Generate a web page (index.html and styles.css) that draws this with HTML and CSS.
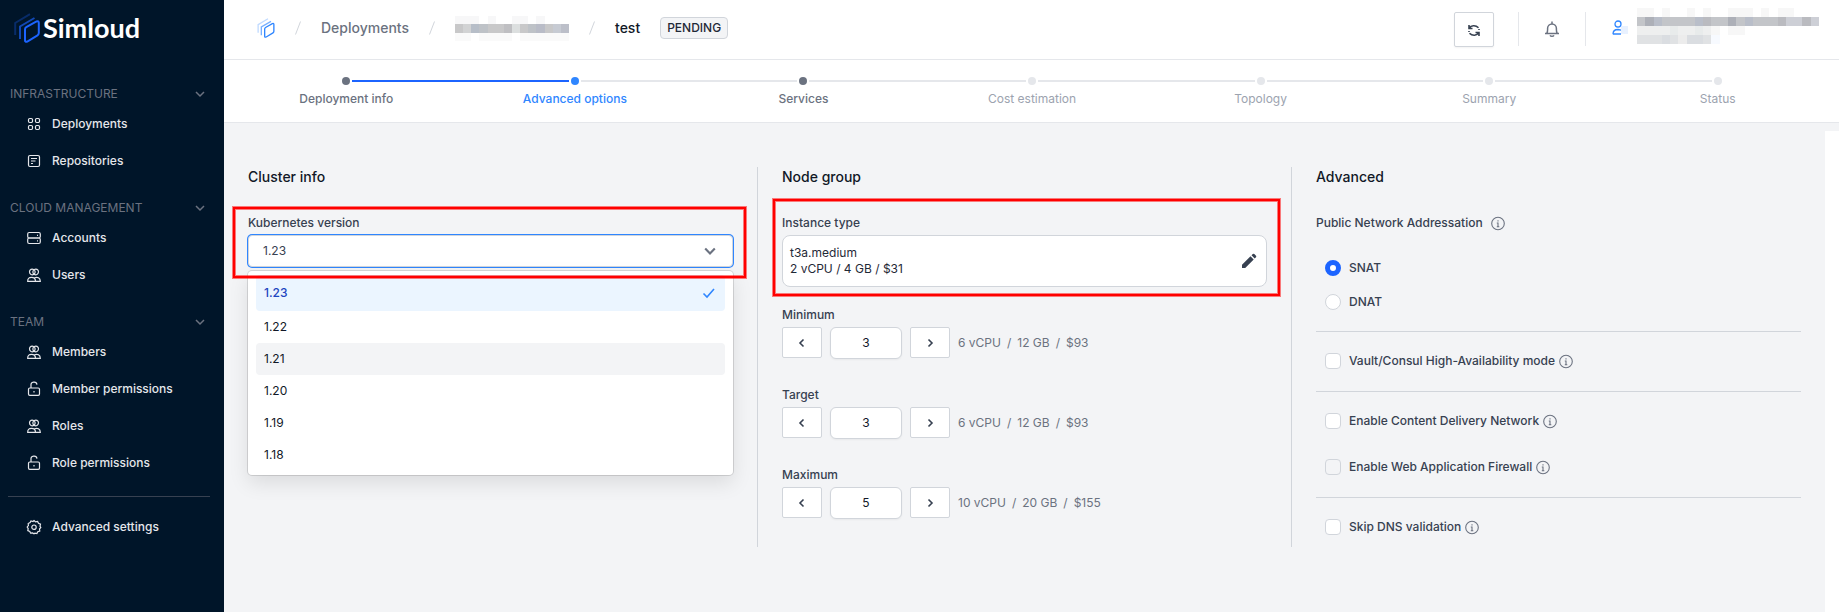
FILE: index.html
```html
<!DOCTYPE html>
<html lang="en">
<head>
<meta charset="utf-8">
<title>Simloud – Advanced options</title>
<link rel="stylesheet" href="styles.css">
</head>
<body>
<svg class="sprite" aria-hidden="true">
  <symbol id="i-chevron" viewBox="0 0 10 10"><path d="M1 3l4 4 4-4"/></symbol>
  <symbol id="i-left" viewBox="0 0 10 10"><path d="M6.500 1.500L3 5l3.500 3.500"/></symbol>
  <symbol id="i-right" viewBox="0 0 10 10"><path d="M3.500 1.500L7 5 3.500 8.500"/></symbol>
  <symbol id="i-grid" viewBox="0 0 16 16"><rect x="2.500" y="2.500" width="4" height="4" rx="1.200"/><rect x="9.500" y="2.500" width="4" height="4" rx="1.200"/><rect x="2.500" y="9.500" width="4" height="4" rx="1.200"/><rect x="9.500" y="9.500" width="4" height="4" rx="1.200"/></symbol>
  <symbol id="i-repo" viewBox="0 0 16 16"><rect x="2.500" y="2.500" width="11" height="11" rx="1.500"/><path d="M5 5.500h6M5 8h4.500M5 10.500h2"/></symbol>
  <symbol id="i-server" viewBox="0 0 16 16"><rect x="1.700" y="2.500" width="12.600" height="5.500" rx="1.500"/><rect x="1.700" y="8" width="12.600" height="5.500" rx="1.500"/><path d="M11 5.300h1M11 10.800h1"/></symbol>
  <symbol id="i-users" viewBox="0 0 16 16"><path d="M8 2.700C6 1.400 3.500 2.300 3.500 4.800S6 8.600 8 7.200c2 1.400 4.500 0 4.500-2.400S10 1.400 8 2.700zM8 2.700c1.500 1.300 1.500 3.300 0 4.500M8 2.700C6.500 4 6.500 6 8 7.200"/><path d="M1.700 14.300c0-3 1.500-4 3.800-4s4 1 4 4zM8.500 10.800c3-1.300 5.800 0 5.800 3.500H9.500"/></symbol>
  <symbol id="i-lock" viewBox="0 0 16 16"><rect x="2.500" y="7" width="11" height="7.300" rx="1.300"/><path d="M5 7V4.500a3 3 0 0 1 6-.8M8 10v1.500"/></symbol>
  <symbol id="i-gear" viewBox="0 0 16 16"><path d="M8 1.500l1.500 1.400 2.100-.5.900 1.900 2 .9-.5 2L14.800 8.500 13.500 10l.3 2-2 .8-.9 1.800-2-.4L8 14.800l-1.400-.9-2 .3-.8-1.800-2-.8.400-2L1.200 8l1.200-1.500-.2-2 1.900-.9.900-1.700 2 .6z"/><circle cx="8" cy="8.200" r="2.200"/></symbol>
  <symbol id="i-info" viewBox="0 0 16 16"><circle cx="8" cy="8.500" r="6.300"/><path d="M8 5.200v1.300M6.800 8H8v3.700M6.800 11.700h2.500"/></symbol>
  <symbol id="i-stack" viewBox="0 0 26 30"><path d="M1.200 22V10L16 1.200" opacity=".3"/><path d="M6 26V13.500L20.500 5" opacity=".65"/><path d="M11 16.500q0-1.500 1.300-2.300L22.500 8.500q2.300-1 2.300 1.300V20q0 1.500-1.300 2.300L13.300 28.500q-2.300 1-2.300-1.300z"/></symbol>
</svg>

<div class="app">
  <aside class="sidebar">
    <a class="brand" href="#"><svg class="brand-mark"><use href="#i-stack"/></svg><span>Simloud</span></a>
    <nav class="menu">
      <section class="menu-group">
        <button class="menu-title" type="button">INFRASTRUCTURE<svg class="icon-s"><use href="#i-chevron"/></svg></button>
        <a class="menu-item" href="#"><svg class="icon"><use href="#i-grid"/></svg>Deployments</a>
        <a class="menu-item" href="#"><svg class="icon"><use href="#i-repo"/></svg>Repositories</a>
      </section>
      <section class="menu-group">
        <button class="menu-title" type="button">CLOUD MANAGEMENT<svg class="icon-s"><use href="#i-chevron"/></svg></button>
        <a class="menu-item" href="#"><svg class="icon"><use href="#i-server"/></svg>Accounts</a>
        <a class="menu-item" href="#"><svg class="icon"><use href="#i-users"/></svg>Users</a>
      </section>
      <section class="menu-group">
        <button class="menu-title" type="button">TEAM<svg class="icon-s"><use href="#i-chevron"/></svg></button>
        <a class="menu-item" href="#"><svg class="icon"><use href="#i-users"/></svg>Members</a>
        <a class="menu-item" href="#"><svg class="icon"><use href="#i-lock"/></svg>Member permissions</a>
        <a class="menu-item" href="#"><svg class="icon"><use href="#i-users"/></svg>Roles</a>
        <a class="menu-item" href="#"><svg class="icon"><use href="#i-lock"/></svg>Role permissions</a>
      </section>
    </nav>
    <div class="menu-footer">
      <a class="menu-item" href="#"><svg class="icon"><use href="#i-gear"/></svg>Advanced settings</a>
    </div>
  </aside>

  <div class="page">
    <header class="topbar">
      <nav class="crumbs" aria-label="Breadcrumb">
        <a class="crumb-home" href="#" aria-label="Home"><svg class="home-mark"><use href="#i-stack"/></svg></a>
        <svg class="slash" viewBox="0 0 6 14"><path d="M.500 13.500L5.500 .500"/></svg>
        <a class="crumb" href="#">Deployments</a>
        <svg class="slash" viewBox="0 0 6 14"><path d="M.500 13.500L5.500 .500"/></svg>
        <svg class="mosaic mosaic-crumb" viewBox="0 0 14 3" preserveAspectRatio="none" shape-rendering="crispEdges">
          <path fill="#f7f7f8" d="M0 0h3v1H0zM4 0h1v1H4zM7 0h2v1H7zM10 0h1v1h-1z"/><path fill="#fafafa" d="M0 2h2v1H0zM3 2h4v1H3zM8 2h6v1H8z"/>
          <path fill="#c8c8c9" d="M0 1h14v1H0z"/><path fill="#d2d3d4" d="M1 1h1v1H1z"/><path fill="#b7bec8" d="M2 1h1v1H2z"/><path fill="#bec2c7" d="M3 1h1v1H3zM9 1h1v1H9z"/><path fill="#bfbfc2" d="M6 1h1v1H6z"/><path fill="#dcdfdf" d="M7 1h1v1H7z"/><path fill="#b9bcc7" d="M10 1h1v1h-1z"/><path fill="#c7cbd3" d="M12 1h1v1h-1z"/><path fill="#bcbfc9" d="M13 1h1v1h-1z"/>
        </svg>
        <svg class="slash" viewBox="0 0 6 14"><path d="M.500 13.500L5.500 .500"/></svg>
        <span class="crumb crumb-current">test</span>
        <span class="badge">PENDING</span>
      </nav>
      <div class="tools">
        <button class="refresh" type="button" aria-label="Refresh"><svg class="icon" viewBox="0 0 16 16"><path d="M3 3v3.500h3.500M3.300 6.300C5 3.300 9.500 2.800 12.500 5.800M13 14v-3.500H9.500M12.700 10.700c-1.700 3-6.200 3.500-9.200.5M13 8V7M3 9v1"/></svg></button>
        <div class="tool-cell">
          <button class="bell" type="button" aria-label="Notifications"><svg viewBox="0 0 18 18"><path d="M2 13.500h14M3.800 13.300c1-1.500.8-3 .8-5a4.400 4.400 0 0 1 8.800 0c0 2-.2 3.500.8 5M9 3.700V1.500M7 15.300c.8 1.300 3.200 1.300 4 0"/></svg></button>
        </div>
        <div class="account">
          <svg class="user" viewBox="0 -4 16 20"><circle cx="6" cy="4" r="3"/><path d="M1 14.200c0-3.500 2-4.700 5-4.700l3 .7M1 14h8"/><path class="user-tint" d="M9 6h8v8H9z"/></svg>
          <svg class="mosaic mosaic-user" viewBox="0 0 22 4" preserveAspectRatio="none" shape-rendering="crispEdges">
            <path fill="#f7f7f7" d="M0 0h2v1H0zM3 0h1v1H3zM6 0h1v1H6zM8 0h1v1H8zM11 0h3v1h-3zM15 0h1v1h-1zM17 0h2v1h-2zM9 2h1v1H9zM11 2h2v1h-2z"/>
            <path fill="#c3c5c9" d="M0 1h22v1H0z"/><path fill="#adb0b8" d="M1 1h1v1H1zM11 1h1v1h-1z"/><path fill="#b9bec9" d="M2 1h1v1H2zM7 1h1v1H7zM13 1h1v1h-1z"/><path fill="#babbc0" d="M8 1h1v1H8zM17 1h1v1h-1zM20 1h1v1h-1z"/><path fill="#cdcfd6" d="M18 1h2v1h-2zM21 1h1v1h-1z"/>
            <path fill="#eeefef" d="M0 2h9v1H0z"/><path fill="#e8ebeb" d="M4 2h1v1H4zM7 2h1v1H7z"/><path fill="#e0e2e4" d="M0 3h9v1H0z"/><path fill="#ececec" d="M5 3h1v1H5z"/><path fill="#dadde1" d="M3 3h1v1H3zM6 3h2v1H6z"/><path fill="#f7faff" d="M9 3h1v1H9z"/>
          </svg>
        </div>
      </div>
    </header>

    <ol class="stepper">
      <li class="step visited first"><span class="rail"><i class="dot"></i></span>Deployment info</li>
      <li class="step active"><span class="rail"><i class="dot"></i></span>Advanced options</li>
      <li class="step visited"><span class="rail"><i class="dot"></i></span>Services</li>
      <li class="step"><span class="rail"><i class="dot"></i></span>Cost estimation</li>
      <li class="step"><span class="rail"><i class="dot"></i></span>Topology</li>
      <li class="step"><span class="rail"><i class="dot"></i></span>Summary</li>
      <li class="step last"><span class="rail"><i class="dot"></i></span>Status</li>
    </ol>

    <main class="workspace">
      <form class="columns">
        <section class="column">
          <h2>Cluster info</h2>
          <div class="field">
            <label for="k8s">Kubernetes version</label>
            <div class="select-box">
              <select id="k8s"><option>1.23</option><option>1.22</option><option>1.21</option><option>1.20</option><option>1.19</option><option>1.18</option></select>
              <svg class="select-arrow"><use href="#i-chevron"/></svg>
              <ul class="options" role="listbox">
                <li class="option selected" role="option" aria-selected="true">1.23<svg class="check" viewBox="0 0 14 14"><path d="M1.500 7.500L5 11l7-8"/></svg></li>
                <li class="option" role="option">1.22</li>
                <li class="option hover" role="option">1.21</li>
                <li class="option" role="option">1.20</li>
                <li class="option" role="option">1.19</li>
                <li class="option" role="option">1.18</li>
              </ul>
            </div>
            <div class="mark mark-version"></div>
          </div>
        </section>

        <section class="column">
          <h2>Node group</h2>
          <div class="field">
            <label for="instance">Instance type</label>
            <button class="instance" id="instance" type="button"><span>t3a.medium<br>2 vCPU / 4 GB / $31</span><svg class="pencil" viewBox="0 0 16 16"><path d="M1 15v-3.200L9.500 3.300l3.200 3.200L4.200 15zM10.500 2.300l1.300-1.300q.8-.6 1.500 0l1.700 1.700q.6.800 0 1.500l-1.300 1.300z"/></svg></button>
            <div class="mark mark-instance"></div>
          </div>
          <div class="counters">
            <div class="field">
              <label for="min">Minimum</label>
              <div class="counter"><button type="button" aria-label="Less"><svg class="icon-s"><use href="#i-left"/></svg></button><input id="min" type="text" value="3"><button type="button" aria-label="More"><svg class="icon-s"><use href="#i-right"/></svg></button><p class="cost"><span>6 vCPU</span><span>/</span><span>12 GB</span><span>/</span><span>$93</span></p></div>
            </div>
            <div class="field">
              <label for="target">Target</label>
              <div class="counter"><button type="button" aria-label="Less"><svg class="icon-s"><use href="#i-left"/></svg></button><input id="target" type="text" value="3"><button type="button" aria-label="More"><svg class="icon-s"><use href="#i-right"/></svg></button><p class="cost"><span>6 vCPU</span><span>/</span><span>12 GB</span><span>/</span><span>$93</span></p></div>
            </div>
            <div class="field">
              <label for="max">Maximum</label>
              <div class="counter"><button type="button" aria-label="Less"><svg class="icon-s"><use href="#i-left"/></svg></button><input id="max" type="text" value="5"><button type="button" aria-label="More"><svg class="icon-s"><use href="#i-right"/></svg></button><p class="cost"><span>10 vCPU</span><span>/</span><span>20 GB</span><span>/</span><span>$155</span></p></div>
            </div>
          </div>
        </section>

        <section class="column">
          <h2>Advanced</h2>
          <div class="caption">Public Network Addressation<svg class="info"><use href="#i-info"/></svg></div>
          <div class="radios">
            <label class="choice"><input type="radio" name="addr" checked>SNAT</label>
            <label class="choice"><input type="radio" name="addr">DNAT</label>
          </div>
          <div class="checks">
            <label class="choice"><input type="checkbox"><span>Vault/Consul High-Availability mode</span><svg class="info"><use href="#i-info"/></svg></label>
          </div>
          <div class="checks">
            <label class="choice"><input type="checkbox"><span>Enable Content Delivery Network</span><svg class="info"><use href="#i-info"/></svg></label>
            <label class="choice"><input type="checkbox" disabled><span>Enable Web Application Firewall</span><svg class="info"><use href="#i-info"/></svg></label>
          </div>
          <div class="checks">
            <label class="choice"><input type="checkbox"><span>Skip DNS validation</span><svg class="info"><use href="#i-info"/></svg></label>
          </div>
        </section>
      </form>
      <div class="gutter"></div>
    </main>
  </div>
</div>
</body>
</html>
```
FILE: styles.css
```css
*, *::before, *::after { box-sizing: border-box; }
body { margin: 0; font: 500 12px/16px Inter, "Liberation Sans", sans-serif; color: #374151; background: #fff; }
button, input, select { font: inherit; color: inherit; margin: 0; }
button { cursor: pointer; padding: 0; }
a { color: inherit; text-decoration: none; }
h2, p, ol, ul { margin: 0; padding: 0; list-style: none; }
svg { fill: none; stroke: currentColor; flex: none; }
.sprite { position: absolute; width: 0; height: 0; }
.icon { width: 16px; height: 16px; stroke-width: 1.2; }
.icon-s { width: 10px; height: 10px; stroke-width: 1.5; }

.app { display: flex; min-height: 100vh; }

/* Sidebar */
.sidebar { flex: none; width: 224px; background: #001529; color: #e5e7eb; }
.brand { display: flex; align-items: center; gap: 3px; padding: 12px 14px 0; color: #fff; font: 700 27px/32px Lato, sans-serif; }
.brand-mark { width: 26px; height: 30px; color: #1c64ff; stroke-width: 2; }
.menu { display: flex; flex-direction: column; gap: 17px; padding-top: 38px; }
.menu-title { display: flex; width: 100%; height: 23px; align-items: center; justify-content: space-between; padding: 0 19px 0 10px; background: none; border: 0; color: #6b7280; font-weight: 400; }
.menu-item { display: flex; align-items: center; gap: 10px; height: 37px; padding-left: 26px; }
.menu-footer { margin: 15px 14px 0 8px; padding-top: 11px; border-top: 1px solid #374151; }
.menu-footer .menu-item { padding-left: 18px; }

/* Header */
.page { flex: 1; min-width: 0; display: flex; flex-direction: column; }
.topbar { display: flex; justify-content: space-between; height: 60px; border-bottom: 1px solid #e5e7eb; }
.crumbs { display: flex; align-items: center; gap: 20px; padding: 0 0 3px 33px; }
.crumb-home { display: flex; }
.home-mark { width: 18px; height: 20px; color: #2f86ff; stroke-width: 2; }
.slash { width: 6px; height: 14px; stroke: #d1d5db; }
.crumb { font-size: 14px; line-height: 20px; color: #6b7280; }
.crumb-current { color: #111827; }
.badge { padding: 2px 6px; background: #f3f4f6; border: 1px solid #d1d5db; border-radius: 4px; color: #1f2937; }
.mosaic { stroke: none; }
.mosaic-crumb { width: 114px; height: 25px; }
.mosaic-user { width: 182px; height: 36px; }
.tools { display: flex; align-items: flex-start; padding: 12px 20px 0 0; }
.refresh { display: flex; align-items: center; justify-content: center; width: 40px; height: 35px; margin-right: 24px; background: #fff; border: 1px solid #d1d5db; border-radius: 2px; box-shadow: 0 1px 2px #0000000d; color: #374151; }
.refresh .icon { stroke-width: 1.6; }
.tool-cell { display: flex; align-items: center; justify-content: center; width: 68px; height: 34px; border: solid #e5e7eb; border-width: 0 1px; }
.bell { display: flex; width: 18px; height: 18px; background: none; border: 0; color: #6b7280; }
.bell svg { width: 18px; height: 18px; stroke-width: 1.5; }
.account { display: flex; align-items: center; gap: 9px; height: 28px; padding-left: 26px; }
.user { width: 16px; height: 20px; color: #2f86ff; stroke-width: 1.3; }
.user-tint { fill: #e8f1ff; stroke: none; }

/* Stepper */
.stepper { display: flex; padding: 16px 7px 15px 8px; border-bottom: 1px solid #e5e7eb; color: #9ca3af; font-weight: 400; }
.step { flex: 1; display: flex; flex-direction: column; gap: 5px; text-align: center; }
.rail { display: flex; align-items: center; gap: 2px; height: 10px; }
.rail::before, .rail::after { content: ""; flex: 1; height: 2px; background: #e5e7eb; }
.dot { width: 8px; height: 8px; border-radius: 50%; background: #e5e7eb; }
.visited, .active { font-weight: 500; }
.visited { color: #6b7280; }
.visited .dot { background: #6b7280; }
.active { color: #2f86ff; }
.active .dot { background: #2f86ff; }
.first .rail::after, .active .rail::before { background: #1c64ff; }
.first .rail::before, .last .rail::after { background: none; }

/* Form */
.workspace { flex: 1; display: flex; padding-top: 8px; background: #f3f4f6; }
.gutter { width: 14px; background: #fff; }
.columns { flex: 1; display: flex; align-items: stretch; align-self: flex-start; gap: 24px; padding: 36px 24px 24px; }
.column { flex: 1 1 0; min-width: 0; }
.column:not(:last-child) { padding-right: 24px; border-right: 1px solid #d1d5db; box-sizing: content-box; }
h2 { margin-bottom: 28px; font-size: 14px; font-weight: 500; line-height: 20px; color: #111827; }
.field { position: relative; display: flex; flex-direction: column; gap: 4px; }
.select-box { position: relative; display: flex; }
select { flex: 1; height: 32px; padding: 0 14px; appearance: none; background: #fff; border: 1px solid #d1d5db; border-radius: 4px; box-shadow: 0 0 0 1px #2f86ff; font-weight: 400; }
.select-arrow { position: absolute; right: 17px; top: 10px; width: 12px; height: 12px; stroke-width: 1.8; color: #6b7280; pointer-events: none; }
.options { position: absolute; z-index: 1; top: 36px; left: 0; right: 0; padding: 4px 8px; background: #fff; border-radius: 4px; box-shadow: 0 0 0 1px #0000001f, 0 8px 20px #0000001a; color: #111827; font-weight: 400; }
.option { display: flex; align-items: center; justify-content: space-between; height: 32px; padding: 0 9px 0 8px; border-radius: 4px; }
.selected { height: 36px; background: #ebf5ff; color: #1e46c0; font-weight: 500; }
.hover { background: #f3f4f6; }
.check { width: 14px; height: 14px; stroke: #2f86ff; stroke-width: 1.6; }

/* Highlight frames over the form */
.mark { position: absolute; z-index: 2; border: 2px solid #f00; box-shadow: 0 0 0 1px #ff000080, inset 0 0 0 1px #ff000080; pointer-events: none; }
.mark-version { top: -8px; right: -13px; bottom: -11px; left: -15px; }
.mark-instance { top: -16px; right: -13px; bottom: -9px; left: -9px; }

.instance { display: flex; align-items: center; justify-content: space-between; height: 52px; padding: 0 9px 0 7px; background: #fff; border: 1px solid #d1d5db; border-radius: 8px; color: #1f2937; font-weight: 400; text-align: left; }
.pencil { width: 16px; height: 16px; fill: #374151; stroke: none; }
.counters { display: flex; flex-direction: column; gap: 28px; margin-top: 20px; }
.counter { display: flex; gap: 8px; height: 32px; }
.counter button { display: flex; align-items: center; justify-content: center; width: 40px; height: 31px; background: #fff; border: 1px solid #d1d5db; border-radius: 2px; }
.counter .icon-s { stroke-width: 1.6; }
.counter input { width: 72px; background: #fff; border: 1px solid #d1d5db; border-radius: 6px; box-shadow: 0 1px 2px #0000000d; text-align: center; color: #111827; font-weight: 400; }
.cost { display: flex; align-items: center; gap: 6px; color: #6b7280; font-weight: 400; }

.caption { display: flex; align-items: center; gap: 7px; height: 16px; margin-bottom: 20px; }
.info { width: 16px; height: 16px; color: #6b7280; stroke-width: 1.1; }
.radios { padding-bottom: 12px; }
.radios .choice { height: 34px; }
.choice { display: flex; align-items: center; height: 30px; padding-left: 9px; }
.choice input { appearance: none; width: 16px; height: 16px; margin-right: 8px; background: #fff; border: 1px solid #d1d5db; border-radius: 4px; }
.choice input[type="radio"] { border-radius: 50%; }
.choice input:checked { border: 5px solid #1c64ff; }
.choice input:disabled { background: #f3f4f6; }
.choice .info { margin-left: 3px; }
.checks { display: flex; flex-direction: column; gap: 16px; padding: 14px 0 15px; border-top: 1px solid #d1d5db; }
.checks:last-child { padding-bottom: 5px; }
```
